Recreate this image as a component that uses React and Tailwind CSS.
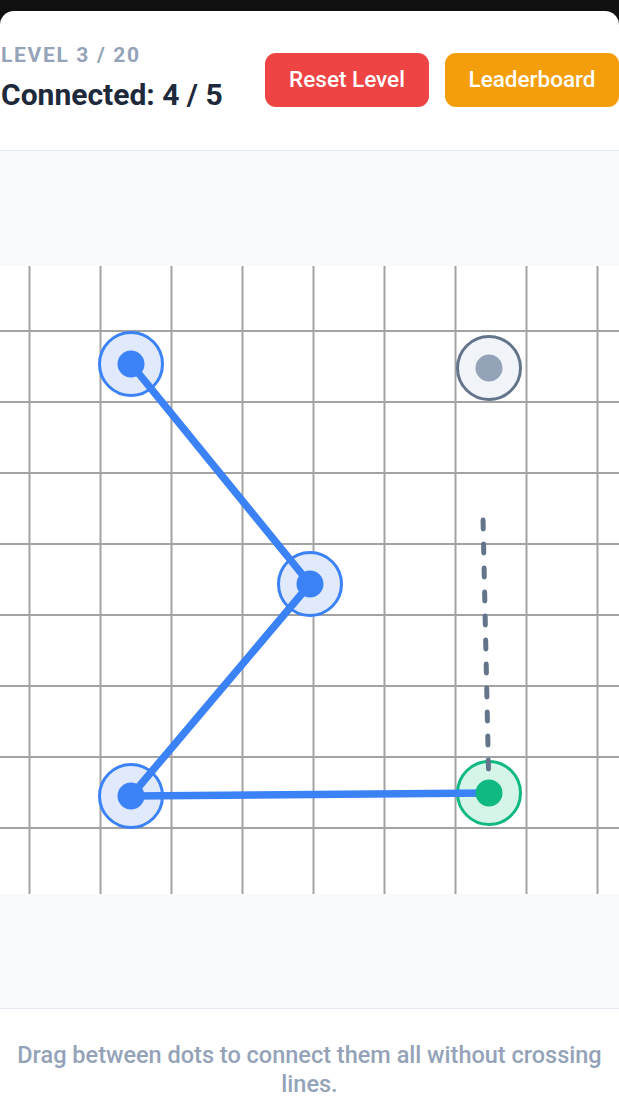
import React from "react";

const GRID_X = [29.5, 100.5, 171.5, 242.5, 313.5, 384.5, 455.5, 526.5, 597.5];
const GRID_Y = [65, 136, 207, 278, 349, 420, 491, 562];

function Board() {
  const A = [131, 98];
  const B = [310, 318];
  const C = [131, 530];
  const D = [489, 102];
  const E = [489, 527];
  const blueOuter = (p, k) => (
    <circle key={k} cx={p[0]} cy={p[1]} r="31.5" fill="#e1eafd" stroke="#3b82f6" strokeWidth="3" />
  );
  return (
    <svg width="619" height="628" viewBox="0 0 619 628" className="block bg-white">
      {GRID_X.map((x) => (
        <line key={"v" + x} x1={x} y1="0" x2={x} y2="628" stroke="#a3a3a3" strokeWidth="2" />
      ))}
      {GRID_Y.map((y) => (
        <line key={"h" + y} x1="0" y1={y} x2="619" y2={y} stroke="#a3a3a3" strokeWidth="2" />
      ))}
      {blueOuter(A, "a")}
      {blueOuter(B, "b")}
      {blueOuter(C, "c")}
      <circle cx={D[0]} cy={D[1]} r="31.5" fill="#f1f5f9" stroke="#64748b" strokeWidth="3" />
      <circle cx={E[0]} cy={E[1]} r="31.5" fill="#d6f5e9" stroke="#10b981" strokeWidth="3" />
      <polyline
        points={`${A[0]},${A[1]} ${B[0]},${B[1]} ${C[0]},${C[1]} ${E[0]},${E[1]}`}
        fill="none"
        stroke="#3b82f6"
        strokeWidth="7.5"
        strokeLinejoin="round"
      />
      <line
        x1={E[0]}
        y1={E[1]}
        x2="483"
        y2="252"
        stroke="#64748b"
        strokeWidth="5"
        strokeDasharray="9 15"
        strokeLinecap="round"
      />
      <circle cx={A[0]} cy={A[1]} r="13.5" fill="#3b82f6" />
      <circle cx={B[0]} cy={B[1]} r="13.5" fill="#3b82f6" />
      <circle cx={C[0]} cy={C[1]} r="13.5" fill="#3b82f6" />
      <circle cx={D[0]} cy={D[1]} r="13.5" fill="#94a3b8" />
      <circle cx={E[0]} cy={E[1]} r="13.5" fill="#10b981" />
    </svg>
  );
}

export default function App() {
  return (
    <div
      className="w-[619px] h-[1100px] overflow-hidden bg-[#111111] pt-[11px]"
      style={{ fontFamily: "Roboto, 'Liberation Sans', sans-serif" }}
    >
      <div className="flex h-full flex-col overflow-hidden rounded-t-[14px] bg-white">
        <header className="flex h-[140px] shrink-0 items-start justify-between border-b border-[#e2e8f0] pl-[1px]">
          <div className="flex flex-col pt-[31px]">
            <div className="text-[21px] font-bold leading-[26px] tracking-[0.08em] text-[#94a3b8]">
              LEVEL 3 / 20
            </div>
            <div className="mt-[9px] text-[30px] font-bold leading-[36px] text-[#1e293b]">
              Connected: 4 / 5
            </div>
          </div>
          <div className="mt-[42px] flex gap-[16px]">
            <button className="flex h-[54px] w-[164px] items-center justify-center rounded-[11px] bg-[#ef4444] text-[22.5px] font-medium text-white">
              Reset Level
            </button>
            <button className="flex h-[54px] w-[174px] items-center justify-center rounded-[11px] bg-[#f59e0b] text-[22.5px] font-medium text-white">
              Leaderboard
            </button>
          </div>
        </header>
        <main className="flex h-[857px] shrink-0 items-center justify-center bg-[#f8fafc]">
          <Board />
        </main>
        <footer className="flex-1 border-t border-[#e2e8f0] px-2 pt-[32px] text-center text-[23.5px] font-medium leading-[29px] text-[#94a3b8]">
          Drag between dots to connect them all without crossing lines.
        </footer>
      </div>
    </div>
  );
}
